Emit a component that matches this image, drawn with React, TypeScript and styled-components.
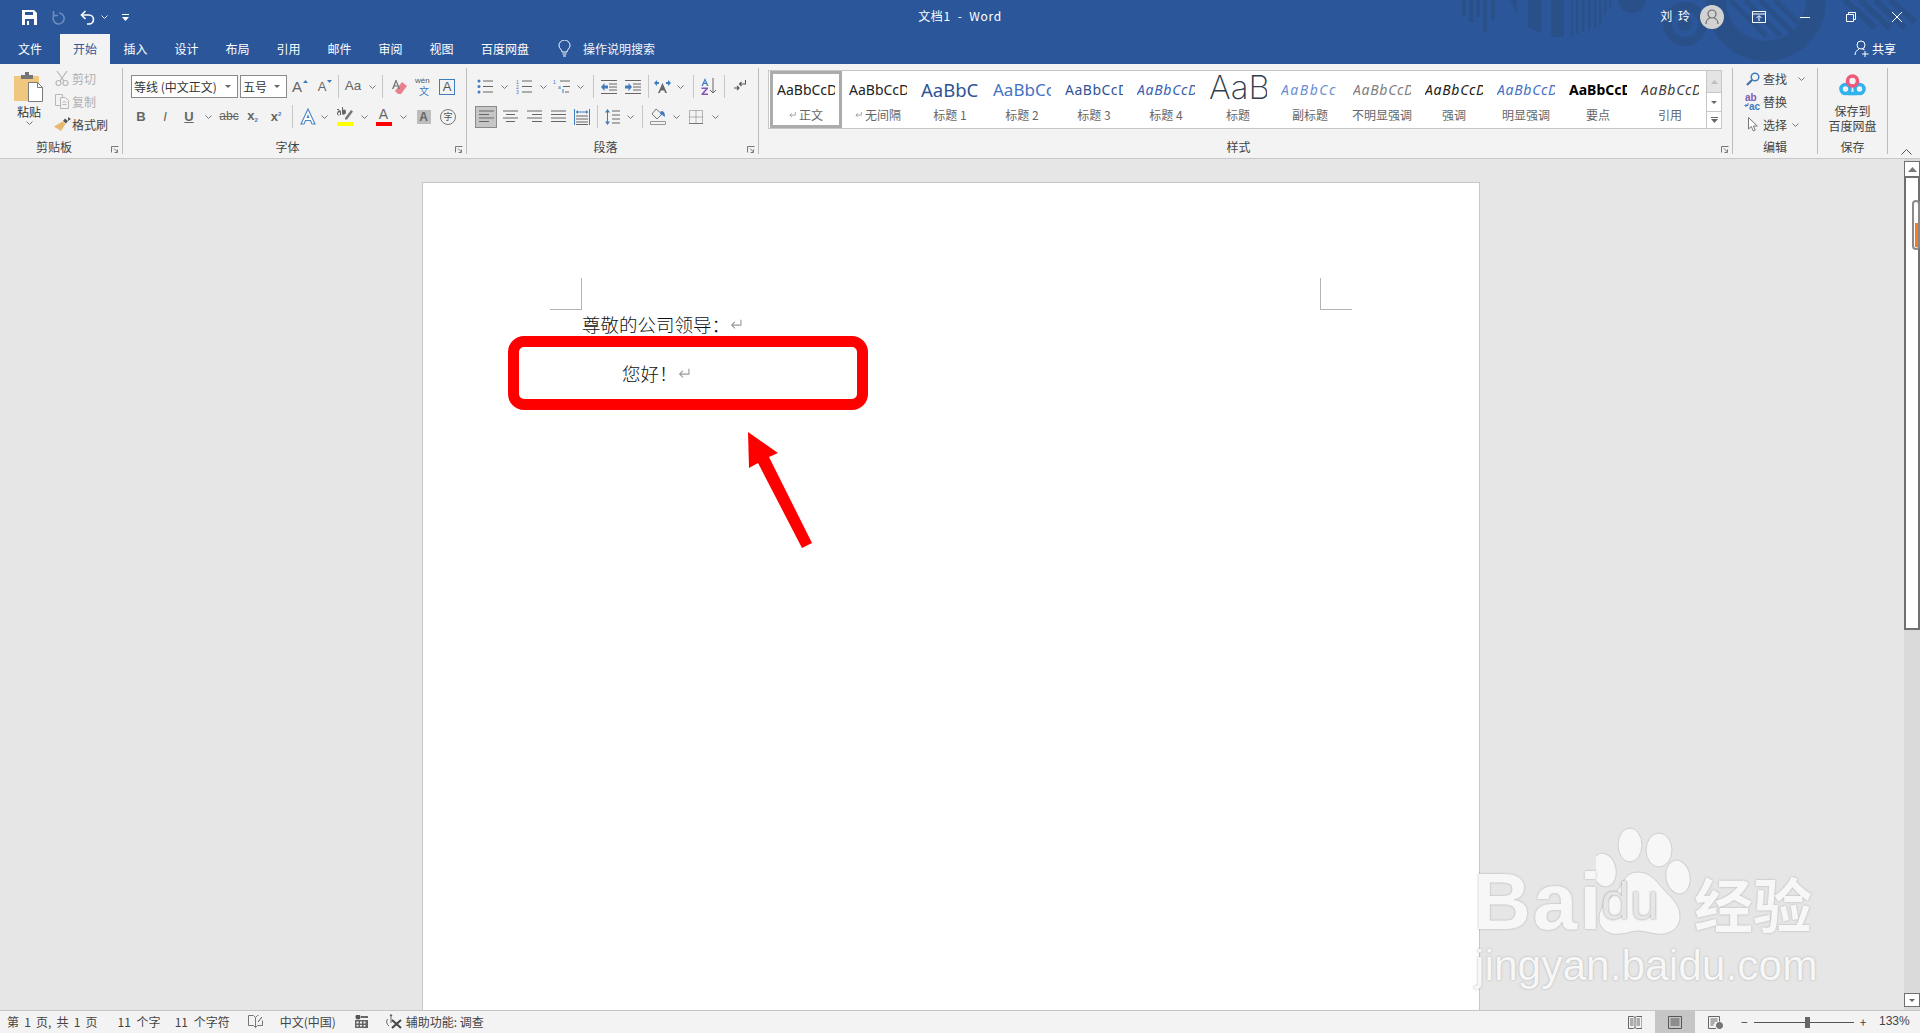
import React from 'react';
import styled, { createGlobalStyle } from 'styled-components';

const uiFont = '"Noto Sans CJK SC", "Liberation Sans", sans-serif';
const latinFont = '"Liberation Sans", "Noto Sans CJK SC", sans-serif';
const blue = '#2b579a';
const ink = '#666666';
const accent = '#3f7cbf';

const GlobalStyle = createGlobalStyle`
  html, body {
    margin: 0;
    padding: 0;
    overflow: hidden;
    background: #e6e6e6;
  }
  * {
    box-sizing: border-box;
  }
`;

const Window = styled.div`
  position: relative;
  width: 1920px;
  height: 1033px;
  display: flex;
  flex-direction: column;
  overflow: hidden;
  font-family: ${uiFont};
  font-size: 12px;
  color: #444;
`;

const Header = styled.header`
  position: relative;
  height: 64px;
  flex: none;
  background: ${blue};
  color: #fff;
`;

const HeaderArt = styled.svg`
  position: absolute;
  right: 0;
  top: 0;
`;

const TitleBar = styled.div`
  position: relative;
  height: 34px;
  display: grid;
  grid-template-columns: 1fr auto 1fr;
  align-items: center;
`;

const Quick = styled.div`
  display: flex;
  align-items: center;
  padding-left: 21px;
`;

const QuickCell = styled.div<{ $w: number }>`
  width: ${(p) => p.$w}px;
  height: 24px;
  flex: none;
  display: flex;
  align-items: center;
  justify-content: center;
`;

const DocTitle = styled.div`
  white-space: pre;
  font-size: 12px;
  letter-spacing: 0.7px;
  margin-bottom: 4px;
`;

const Account = styled.div`
  display: flex;
  align-items: center;
  justify-content: flex-end;
`;

const UserName = styled.span`
  margin-right: 10px;
  margin-bottom: 4px;
  white-space: pre;
  word-spacing: 3px;
`;

const Avatar = styled.div`
  width: 24px;
  height: 24px;
  margin-right: 12px;
  border-radius: 50%;
  background: #d2d2d2;
  display: flex;
  align-items: center;
  justify-content: center;
`;

const WinButton = styled.div`
  width: 46px;
  height: 30px;
  display: flex;
  align-items: center;
  justify-content: center;
`;

const TabBar = styled.nav`
  position: relative;
  height: 30px;
  display: flex;
`;

const Tab = styled.div<{ $w?: number; $active?: boolean }>`
  width: ${(p) => p.$w ?? 51}px;
  flex: none;
  padding-bottom: 2px;
  display: flex;
  align-items: center;
  justify-content: center;
  background: ${(p) => (p.$active ? '#f3f3f3' : 'transparent')};
  color: ${(p) => (p.$active ? blue : '#fff')};
`;

const TellMe = styled.div`
  margin-left: 15px;
  padding-bottom: 2px;
  display: flex;
  align-items: center;
  gap: 12px;
  color: #f2f5fa;
`;

const Share = styled.div`
  margin-left: auto;
  margin-right: 24px;
  padding-bottom: 2px;
  display: flex;
  align-items: center;
  gap: 3px;
`;

const Ribbon = styled.section`
  height: 95px;
  flex: none;
  display: flex;
  background: #f3f3f3;
  border-bottom: 1px solid #c8c8c8;
`;

const Group = styled.div<{ $w: number; $pad?: number }>`
  position: relative;
  width: ${(p) => p.$w}px;
  height: 86px;
  margin-top: 4px;
  flex: none;
  display: flex;
  flex-direction: column;
  padding-left: ${(p) => p.$pad ?? 0}px;
  border-right: 1px solid #bcbcbc;
`;

const GroupBody = styled.div<{ $top?: number }>`
  padding-top: ${(p) => p.$top ?? 0}px;
  display: flex;
  flex-direction: column;
`;

const GroupLabel = styled.div<{ $inset?: number }>`
  position: absolute;
  left: 0;
  right: ${(p) => p.$inset ?? 0}px;
  bottom: -2px;
  height: 18px;
  line-height: 18px;
  text-align: center;
  color: #444;
`;

const Launcher = styled.svg`
  position: absolute;
  right: 3px;
  bottom: 1px;
`;

const Tools = styled.div<{ $gap?: number }>`
  display: flex;
  align-items: center;
  height: 23px;
  margin-bottom: ${(p) => p.$gap ?? 0}px;
`;

const Cell = styled.div<{ $w: number; $l?: number }>`
  width: ${(p) => p.$w}px;
  height: 22px;
  margin-left: ${(p) => p.$l ?? 0}px;
  flex: none;
  display: flex;
  align-items: center;
  justify-content: center;
`;

const ActiveCell = styled(Cell)`
  background: #c6c6c6;
  border: 1px solid #8a8a8a;
`;

const Divider = styled.div<{ $l?: number }>`
  width: 1px;
  height: 23px;
  flex: none;
  margin-left: ${(p) => p.$l ?? 0}px;
  background: #c6c6c6;
`;

const Picker = styled.div<{ $w: number; $l?: number }>`
  width: ${(p) => p.$w}px;
  height: 23px;
  flex: none;
  margin-left: ${(p) => p.$l ?? 0}px;
  padding: 0 6px 0 2px;
  display: flex;
  align-items: center;
  justify-content: space-between;
  background: #fff;
  border: 1px solid #8a8a8a;
  color: #333;
  white-space: nowrap;
  overflow: hidden;
`;

const Caret = styled.span`
  width: 0;
  height: 0;
  flex: none;
  border-left: 3.5px solid transparent;
  border-right: 3.5px solid transparent;
  border-top: 3.5px solid #666;
`;

const Letter = styled.span<{ $size?: number; $color?: string; $bold?: boolean; $italic?: boolean; $under?: boolean; $strike?: boolean }>`
  font-family: ${latinFont};
  font-size: ${(p) => p.$size ?? 13}px;
  line-height: 1.2;
  font-weight: ${(p) => (p.$bold ? 700 : 400)};
  font-style: ${(p) => (p.$italic ? 'italic' : 'normal')};
  color: ${(p) => p.$color ?? ink};
  text-decoration: ${(p) => (p.$under ? 'underline' : p.$strike ? 'line-through' : 'none')};
`;

const TopMark = styled.span`
  align-self: flex-start;
  margin-top: 4px;
  margin-left: 1px;
  display: flex;
`;

const Sub = styled.sub`
  font-size: 6px;
  color: ${accent};
  vertical-align: -2px;
`;

const Sup = styled.sup`
  font-size: 6px;
  color: ${accent};
  vertical-align: 5px;
`;

const BarLetter = styled.span<{ $bar: string }>`
  display: flex;
  flex-direction: column;
  align-items: center;
  font-family: ${latinFont};
  font-size: 14px;
  line-height: 14px;
  color: ${ink};
  &::after {
    content: '';
    width: 16px;
    height: 4px;
    margin-top: 1px;
    background: ${(p) => p.$bar};
  }
`;

const BoxLetter = styled.span`
  width: 16px;
  height: 16px;
  display: flex;
  align-items: center;
  justify-content: center;
  border: 1px solid ${accent};
  font-family: ${latinFont};
  font-size: 13px;
  color: #555;
`;

const ShadeLetter = styled.span`
  width: 14px;
  height: 14px;
  display: flex;
  align-items: center;
  justify-content: center;
  background: #bdbdbd;
  font-family: ${latinFont};
  font-weight: 700;
  font-size: 12px;
  color: #666;
`;

const Circled = styled.span`
  width: 16px;
  height: 16px;
  border-radius: 50%;
  display: flex;
  align-items: center;
  justify-content: center;
  border: 1px solid #777;
  font-size: 9px;
  color: #555;
`;

const PasteColumn = styled.div`
  width: 46px;
  margin-left: 6px;
  flex: none;
  display: flex;
  flex-direction: column;
  align-items: center;
  padding-top: 4px;
`;

const PasteText = styled.div`
  margin-top: 2px;
  margin-bottom: 1px;
  line-height: 16px;
  color: #333;
`;

const ClipRow = styled.div`
  display: flex;
`;

const MiniColumn = styled.div`
  margin-left: 1px;
  margin-top: -1px;
  display: flex;
  flex-direction: column;
`;

const MiniRow = styled.div<{ $off?: boolean }>`
  height: 23px;
  display: flex;
  align-items: center;
  color: ${(p) => (p.$off ? '#b0b0b0' : '#444')};
`;

const MiniIcon = styled.div<{ $w?: number }>`
  width: ${(p) => p.$w ?? 18}px;
  margin-right: 1px;
  flex: none;
  display: flex;
  justify-content: center;
`;

const MiniChevron = styled.span<{ $l: number }>`
  margin-left: ${(p) => p.$l}px;
  display: flex;
`;

const Gallery = styled.div`
  margin-top: 2px;
  width: 954px;
  height: 59px;
  display: flex;
  padding-left: 1px;
  background: #fff;
  border: 1px solid #c6c6c6;
`;

const StyleItem = styled.div<{ $selected?: boolean }>`
  width: 72px;
  height: 57px;
  flex: none;
  display: flex;
  flex-direction: column;
  align-items: center;
  box-shadow: ${(p) => (p.$selected ? 'inset 0 0 0 3px #ababab' : 'none')};
`;

const Sample = styled.div<{ $size?: number; $color?: string; $italic?: boolean; $bold?: boolean; $light?: boolean; $track?: number }>`
  width: 58px;
  height: 34px;
  margin-top: 1px;
  overflow: hidden;
  white-space: nowrap;
  font-family: ${(p) => (p.$light ? 'Inter, sans-serif' : '"Noto Sans", sans-serif')};
  font-size: ${(p) => p.$size ?? 14}px;
  line-height: ${(p) => (p.$light ? 30 : 36)}px;
  font-weight: ${(p) => (p.$bold ? 700 : p.$light ? 200 : 400)};
  font-style: ${(p) => (p.$italic ? 'italic' : 'normal')};
  letter-spacing: ${(p) => p.$track ?? 0}px;
  color: ${(p) => p.$color ?? '#222'};
`;

const StyleName = styled.div`
  display: flex;
  align-items: center;
  gap: 3px;
  height: 16px;
  color: #666;
  white-space: nowrap;
`;

const GalleryScroll = styled.div`
  margin-left: auto;
  width: 15px;
  display: flex;
  flex-direction: column;
  border-left: 1px solid #c6c6c6;
`;

const ScrollStep = styled.div<{ $h: number; $off?: boolean }>`
  height: ${(p) => p.$h}px;
  display: flex;
  align-items: center;
  justify-content: center;
  background: ${(p) => (p.$off ? '#e4e4e4' : '#fff')};
  & + & {
    border-top: 1px solid #c6c6c6;
  }
`;

const EditBody = styled(GroupBody)`
  margin-top: -1px;
`;

const EditIcon = styled.div`
  width: 21px;
  flex: none;
  display: flex;
  justify-content: center;
`;

const SaveBody = styled.div`
  display: flex;
  flex-direction: column;
  align-items: center;
  padding-top: 6px;
  line-height: 15px;
  color: #444;
`;

const SaveText = styled.div`
  margin-top: 6px;
  text-align: center;
`;

const Collapse = styled.div`
  flex: 1;
  display: flex;
  justify-content: center;
  align-items: flex-end;
  padding: 0 0 3px 5px;
`;

const Workspace = styled.main`
  height: 851px;
  flex: none;
  display: flex;
  background: #e6e6e6;
`;

const DocArea = styled.div`
  flex: 1;
  overflow: hidden;
  padding: 23px 0 0 422px;
`;

const Page = styled.article`
  position: relative;
  width: 1058px;
  height: 900px;
  padding: 95px 127px 0;
  background: #fff;
  border: 1px solid #c6c6c6;
`;

const Crops = styled.div`
  display: flex;
  justify-content: space-between;
  margin-bottom: -8px;
`;

const Crop = styled.div<{ $right?: boolean }>`
  width: 32px;
  height: 32px;
  border-bottom: 1px solid #b4b4b4;
  ${(p) => (p.$right ? 'border-left' : 'border-right')}: 1px solid #b4b4b4;
`;

const Para = styled.p<{ $indent?: number }>`
  margin: 0;
  padding-left: ${(p) => 32 + (p.$indent ?? 0)}px;
  padding-bottom: 5px;
  height: 49px;
  display: flex;
  align-items: center;
  font-size: 18.5px;
  font-weight: 300;
  color: #111;
`;

const RedBox = styled.div`
  position: absolute;
  left: 85px;
  top: 153px;
  width: 360px;
  height: 74px;
  border: 11px solid #ff0000;
  border-radius: 16px;
`;

const Arrow = styled.svg`
  position: absolute;
  left: 317px;
  top: 242px;
`;

const Scrollbar = styled.aside`
  width: 16px;
  flex: none;
  padding-top: 2px;
  display: flex;
  flex-direction: column;
  background: #dadada;
`;

const ScrollEnd = styled.div<{ $h: number }>`
  height: ${(p) => p.$h}px;
  flex: none;
  display: flex;
  align-items: center;
  justify-content: center;
  background: #fff;
  border: 1px solid #707070;
`;

const Track = styled.div`
  position: relative;
  height: 453px;
  flex: none;
  background: #fff;
  border: 2px solid #707070;
  border-top-width: 1px;
`;

const Thumb = styled.div`
  position: absolute;
  right: -2px;
  top: 22px;
  width: 8px;
  height: 50px;
  border: 2px solid #8a8a8a;
  border-radius: 4px;
  background: #fff;
  &::after {
    content: '';
    position: absolute;
    left: 1px;
    bottom: 1px;
    width: 3px;
    height: 24px;
    background: #f47b20;
  }
`;

const ScrollGap = styled.div`
  flex: 1;
`;

const ScrollDown = styled(ScrollEnd)`
  margin-bottom: 3px;
`;

const StatusBar = styled.footer`
  height: 23px;
  flex: none;
  display: flex;
  align-items: center;
  padding-left: 7px;
  background: #f3f3f3;
  border-top: 1px solid #c6c6c6;
  color: #444;
`;

const StatusItem = styled.div<{ $l?: number; $word?: number }>`
  margin-left: ${(p) => p.$l ?? 0}px;
  margin-bottom: 2px;
  flex: none;
  display: flex;
  align-items: center;
  white-space: pre;
  word-spacing: ${(p) => p.$word ?? 0}px;
`;

const ViewButton = styled.div<{ $w: number; $active?: boolean }>`
  width: ${(p) => p.$w}px;
  height: 22px;
  flex: none;
  display: flex;
  align-items: center;
  justify-content: center;
  background: ${(p) => (p.$active ? '#c6c6c6' : 'transparent')};
`;

const ViewSet = styled.div`
  margin-left: auto;
  display: flex;
  align-items: center;
`;

const Zoomer = styled.div`
  margin-left: 6px;
  width: 126px;
  flex: none;
  display: flex;
  align-items: center;
  gap: 6px;
`;

const ZoomLine = styled.div`
  position: relative;
  width: 100px;
  height: 1px;
  flex: none;
  background: #555;
  &::after {
    content: '';
    position: absolute;
    left: 51px;
    top: -5px;
    width: 5px;
    height: 11px;
    background: #666;
  }
`;

const ZoomValue = styled.div`
  width: 53px;
  padding-left: 12px;
  margin-bottom: 2px;
  font-family: ${latinFont};
`;

const Watermark = styled.div`
  position: absolute;
  left: 1470px;
  top: 825px;
  width: 350px;
  height: 170px;
  color: #f7f7f7;
  text-shadow: 0 0 2px rgba(110, 110, 110, 0.55);
  pointer-events: none;
`;

const MarkPaw = styled.svg`
  position: absolute;
  left: 126px;
  top: 0;
`;

const MarkBai = styled.span`
  position: absolute;
  left: 3px;
  top: 32px;
  font-family: ${latinFont};
  font-weight: 700;
  font-size: 80px;
  letter-spacing: 2px;
  line-height: 90px;
`;

const MarkDu = styled.span`
  position: absolute;
  left: 131px;
  top: 48px;
  font-family: ${latinFont};
  font-size: 52px;
  line-height: 56px;
  color: #e6e6e6;
  text-shadow: 0 0 2px rgba(90, 90, 90, 0.7);
`;

const MarkCn = styled.span`
  position: absolute;
  left: 224px;
  top: 43px;
  font-family: ${uiFont};
  font-weight: 700;
  font-size: 59px;
  line-height: 70px;
  white-space: nowrap;
`;

const MarkUrl = styled.span`
  position: absolute;
  left: 5px;
  top: 116px;
  font-family: ${latinFont};
  font-size: 42.5px;
  line-height: 50px;
  white-space: nowrap;
`;

type ChevronProps = { color?: string };

function Chevron({ color = '#777' }: ChevronProps) {
  return (
    <svg width="7" height="4" viewBox="0 0 7 4" fill="none" stroke={color}>
      <path d="M.5.5l3 3 3-3" />
    </svg>
  );
}

function ReturnMark({ size = 12, color = '#999999' }: { size?: number; color?: string }) {
  return (
    <svg width={size} height={size} viewBox="0 0 11 11" fill="none" stroke={color} strokeWidth="1">
      <path d="M10 1.500v5H1.500M4.500 3.500l-3 3 3 3" />
    </svg>
  );
}

function LauncherIcon() {
  return (
    <Launcher width="8" height="7" viewBox="0 0 8 7" fill="none" stroke="#777">
      <path d="M.5 6.500v-6h7M3 2.500l3.500 3.500M6.500 3.500v3h-3" />
    </Launcher>
  );
}

const Lines = ({ rows }: { rows: [number, number][] }) => (
  <>
    {rows.map(([x1, x2], i) => (
      <path key={i} d={`M${x1} ${1.5 + i * 3.5}H${x2}`} />
    ))}
  </>
);

function AlignIcon({ rows }: { rows: [number, number][] }) {
  return (
    <svg width="15" height="15" viewBox="0 0 15 15" fill="none" stroke={ink}>
      <g transform="translate(0 .5)">
        <Lines rows={rows} />
      </g>
    </svg>
  );
}

function ListIcon({ kind }: { kind: 'bullet' | 'number' | 'multi' }) {
  return (
    <svg width="18" height="15" viewBox="0 0 18 15" fill="none">
      {kind === 'bullet' && (
        <g fill={accent}>
          <circle cx="2" cy="2" r="1.500" />
          <circle cx="2" cy="7.500" r="1.500" />
          <circle cx="2" cy="13" r="1.500" />
        </g>
      )}
      {kind !== 'bullet' && (
        <g fill={accent} fontSize="5" fontFamily="Liberation Sans">
          <text x="0" y="4.500">1</text>
          {kind === 'number' ? (
            <>
              <text x="0" y="9.500">2</text>
              <text x="0" y="14.500">3</text>
            </>
          ) : (
            <text x="5" y="9.500">a</text>
          )}
        </g>
      )}
      <g stroke={ink}>
        {kind === 'multi' ? (
          <path d="M7 2h10M10 7.500h7M12 13h4" />
        ) : (
          <path d="M6 2h10M6 7.500h10M6 13h10" />
        )}
      </g>
      {kind === 'multi' && <path d="M10 10v4" stroke={accent} />}
    </svg>
  );
}

function IndentIcon({ flip }: { flip?: boolean }) {
  return (
    <svg width="17" height="14" viewBox="0 0 17 14" fill="none">
      <path d="M0 .5h16M8 4h8M8 7h8M8 10h8M0 13.500h16" stroke={ink} />
      <path d={flip ? 'M0 5.500h3.500V3L7 7l-3.500 4V8.500H0z' : 'M7 5.500H3.500V3L0 7l3.500 4V8.500H7z'} fill={accent} />
    </svg>
  );
}

const icons = {
  save: (
    <svg width="15" height="16" viewBox="0 0 15 16" fill="#fff">
      <path d="M0 1h12l3 3v12H0z" />
      <path d="M3 3h8v3H3zM3 10h9v6H3z" fill={blue} />
      <path d="M5 12h2v4H5z" fill="#fff" />
    </svg>
  ),
  redo: (
    <svg width="14" height="15" viewBox="0 0 14 15" fill="none" stroke="#6d8dbd" strokeWidth="1.600">
      <path d="M8 3a5.500 5.500 0 1 1-5 2.500" />
      <path d="M2.500 1v4.500H7" />
    </svg>
  ),
  undo: (
    <svg width="15" height="15" viewBox="0 0 15 15" fill="none" stroke="#fff" strokeWidth="1.600">
      <path d="M5.500 1L1.500 5l4 4" />
      <path d="M2 5h7a4.500 4.500 0 0 1 0 9H7" />
    </svg>
  ),
  customize: (
    <svg width="7" height="7" viewBox="0 0 7 7" fill="#fff">
      <path d="M0 0h7v1H0zM0 3h7L3.500 7z" />
    </svg>
  ),
  display: (
    <svg width="14" height="12" viewBox="0 0 14 12" fill="none" stroke="#fff">
      <path d="M.5.500h13v11H.5zM.5 3h13" />
      <path d="M7 10V5M4.500 7L7 4.500 9.500 7" />
    </svg>
  ),
  minimize: (
    <svg width="10" height="1" viewBox="0 0 10 1">
      <path d="M0 0h10v1H0z" fill="#fff" />
    </svg>
  ),
  restore: (
    <svg width="10" height="10" viewBox="0 0 10 10" fill="none" stroke="#fff">
      <path d="M.5 2.500h7v7h-7zM2.500 2.500v-2h7v7h-2" />
    </svg>
  ),
  close: (
    <svg width="12" height="12" viewBox="0 0 12 12" fill="none" stroke="#fff">
      <path d="M1 1l10 10M11 1L1 11" />
    </svg>
  ),
  person: (
    <svg width="14" height="16" viewBox="0 0 14 16" fill="none" stroke="#6c6c6c" strokeWidth="1.200">
      <circle cx="7" cy="5" r="4" />
      <path d="M1 15c0-3 2-5.500 4-6M13 15c0-3-2-5.500-4-6" />
    </svg>
  ),
  share: (
    <svg width="15" height="17" viewBox="0 0 15 17" fill="none" stroke="#fff">
      <circle cx="7" cy="5" r="4" />
      <path d="M1 15c0-3 2-5 4-6M8.500 9.500h2M11 11v6M8 14h6.500" />
    </svg>
  ),
  bulb: (
    <svg width="13" height="17" viewBox="0 0 13 17" fill="none" stroke="#fff">
      <path d="M4 12c0-2.500-3-3.500-3-6.500a5.500 5.500 0 0 1 11 0C12 8.500 9 9.500 9 12z" />
      <path d="M4.500 14h4M5 16h3" />
    </svg>
  ),
  paste: (
    <svg width="30" height="30" viewBox="0 0 30 30">
      <path d="M0 4h25v25H0z" fill="#efc77e" />
      <path d="M7 3h4V0h4v3h4v4H7z" fill="#767676" />
      <path d="M14.500 10.500h9l5 5v14h-14z" fill="#fff" stroke="#7a7a7a" />
      <path d="M23.500 10.500v5h5" fill="none" stroke="#7a7a7a" />
    </svg>
  ),
  cut: (
    <svg width="14" height="15" viewBox="0 0 14 15" fill="none" stroke="#b8b8b8" strokeWidth="1.200">
      <path d="M2 0l7 10M12 0L5 10" />
      <circle cx="3.500" cy="12" r="2.500" />
      <circle cx="10.500" cy="12" r="2.500" />
    </svg>
  ),
  copy: (
    <svg width="15" height="15" viewBox="0 0 15 15" fill="none" stroke="#b8b8b8">
      <path d="M.5.500h7v3M.5.500v11h5M5.500 3.500h5l3 3v8h-8zM7.500 8h4M7.500 10.500h4" />
    </svg>
  ),
  brush: (
    <svg width="17" height="15" viewBox="0 0 17 15">
      <path d="M11 1.500l3 2.500-2 2.500-3-2.500z" fill="#555" />
      <path d="M14 0l3 2-3 2z" fill="#555" />
      <path d="M8.500 4.500l3 2.500L7 14 0 9.500z" fill="#e6b96f" />
    </svg>
  ),
  grow: (
    <svg width="5" height="3" viewBox="0 0 5 3" fill={accent}>
      <path d="M0 3l2.500-3L5 3z" />
    </svg>
  ),
  shrink: (
    <svg width="5" height="3" viewBox="0 0 5 3" fill={accent}>
      <path d="M0 0l2.500 3L5 0z" />
    </svg>
  ),
  eraser: (
    <svg width="16" height="16" viewBox="0 0 16 16">
      <path d="M10 3l5 4-6 8H6L3 12z" fill="#ea7f8e" />
      <path d="M0 10L3.500 1h1L8 10H6.500l-.8-2.500H2.500L1.500 10zM3 6.500h2.300L4 3z" fill="#777" />
    </svg>
  ),
  phonetic: (
    <svg width="18" height="21" viewBox="0 0 18 21">
      <text x="0" y="7" fontSize="8" fill="#555" fontFamily="Liberation Sans">wén</text>
      <text x="4" y="19" fontSize="10" fill={accent} fontFamily="Noto Sans CJK SC">文</text>
    </svg>
  ),
  textEffect: (
    <svg width="18" height="18" viewBox="0 0 18 18">
      <path d="M9 1l7 15h-3l-1.500-3.500h-5L5 16H2z" fill="#fff" stroke="#4a86c5" strokeWidth="1.100" />
      <path d="M7.500 10h3L9 6z" fill="#4a86c5" />
    </svg>
  ),
  highlight: (
    <svg width="16" height="19" viewBox="0 0 16 19">
      <path d="M0 2h2l-.3 1.500C1 3 .5 3 0 3zM1 4c1.500-1 3-1 3 1v3H3V5.500C2 5 1 6 1 7s1 1 2 .5V8c-2 1-3.500 0-3-2zM5 0h1v3c1.500-1 3-.3 3 2s-2 3-4 2.500z" fill="#666" />
      <path d="M8 11l6-8 2 1.500-6 8H8z" fill="#777" />
      <path d="M0 15h16v4H0z" fill="#ffff00" />
    </svg>
  ),
  wideChar: (
    <svg width="17" height="14" viewBox="0 0 17 14" fill="none">
      <path d="M8.500 3L4 13h1.800l1-2.500h3.400l1 2.500H13z" fill="#666" />
      <path d="M0 3l3-3v2h2v2H3v2zM17 3l-3-3v2h-2v2h2v2z" fill={accent} />
    </svg>
  ),
  sort: (
    <svg width="16" height="17" viewBox="0 0 16 17" fill="none">
      <path d="M4 0l3.500 8H6l-.7-2H2.700L2 8H.500zM3.200 4.800h1.600L4 2.500z" fill={accent} />
      <path d="M.5 9.500h6.500v1.300L2.800 15.500H7V17H.5v-1.300l4.200-4.700H.5z" fill="#8258b5" />
      <path d="M12 0v15M9 12l3 3 3-3" stroke={ink} />
    </svg>
  ),
  marks: (
    <svg width="12" height="13" viewBox="0 0 12 13" fill="none" stroke="#555" strokeWidth="1.100">
      <path d="M11.500 0v4H5.500M7.500 2l-2 2 2 2" />
      <path d="M0 8h5M3 6l2 2-2 2" />
    </svg>
  ),
  distribute: (
    <svg width="16" height="16" viewBox="0 0 16 16" fill="none">
      <path d="M.5 0v16M15.500 0v16M2 3h12" stroke={accent} />
      <path d="M2 3l2-2v4zM14 3l-2-2v4z" fill={accent} />
      <path d="M2 7h12M2 10h12M2 13h12M2 15.500h12" stroke={ink} />
    </svg>
  ),
  spacing: (
    <svg width="15" height="16" viewBox="0 0 15 16" fill="none">
      <path d="M2.500 2v12" stroke={accent} />
      <path d="M2.500 0L5 3.500H0zM2.500 16L5 12.500H0z" fill={accent} />
      <path d="M7 2h8M7 6h8M7 10h8M7 14h8" stroke={ink} />
    </svg>
  ),
  shade: (
    <svg width="17" height="17" viewBox="0 0 17 17" fill="none">
      <path d="M6 1l6 5-5 5-5-5z" stroke="#777" />
      <path d="M11 3c3 0 4 2 4 6-1-1-3-2-5-3z" fill={accent} />
      <path d="M.5 13.500h15v3H.5z" stroke="#999" />
    </svg>
  ),
  borders: (
    <svg width="14" height="14" viewBox="0 0 14 14" fill="none" stroke="#777" strokeDasharray="1 1">
      <path d="M.5.500h13v13H.5zM7 .5v13M.5 7h13" />
      <path d="M0 13.500h14" strokeDasharray="none" />
    </svg>
  ),
  find: (
    <svg width="14" height="14" viewBox="0 0 14 14" fill="none" stroke={accent} strokeWidth="1.500">
      <circle cx="9" cy="5" r="3.800" />
      <path d="M6 8l-5 5" strokeWidth="2.200" stroke="#3f6fa8" />
    </svg>
  ),
  replace: (
    <svg width="17" height="17" viewBox="0 0 17 17" fill="none">
      <text x="1" y="8" fontSize="10" fontFamily="Liberation Sans" fontWeight="700" fill="#8258b5">ab</text>
      <text x="5" y="17" fontSize="10" fontFamily="Liberation Sans" fontWeight="700" fill={accent}>ac</text>
      <path d="M4 10v2.500H1M2.500 11L1 12.500 2.500 14" stroke={accent} />
    </svg>
  ),
  select: (
    <svg width="10" height="15" viewBox="0 0 10 15" fill="#fff" stroke="#777">
      <path d="M.5.500v11.500l2.800-2.500 2 4.500 2-1-2-4h4z" />
    </svg>
  ),
  cloud: (
    <svg width="27" height="23" viewBox="0 0 27 23" fill="none" strokeWidth="3.600">
      <circle cx="6.500" cy="15" r="4.500" stroke="#2fb2ee" />
      <circle cx="20.500" cy="15" r="4.500" stroke="#2fb2ee" />
      <circle cx="13.500" cy="7" r="5" stroke="#ef5a78" />
      <path d="M9 19.500h9" stroke="#2fb2ee" />
    </svg>
  ),
  book: (
    <svg width="15" height="13" viewBox="0 0 15 13" fill="none" stroke="#777">
      <path d="M.5.500h5l2 2v10l-2-2h-5zM7.500 2.500l2-2h1M7.500 12.500l2-2h5v-5" />
      <path d="M10 7l4-5" stroke="#555" />
    </svg>
  ),
  calendar: (
    <svg width="13" height="13" viewBox="0 0 13 13">
      <circle cx="3" cy="2" r="2.500" fill="#555" />
      <path d="M6 1h7v2H6zM0 5h13v8H0z" fill="#666" />
      <path d="M1.500 6.500h2v2h-2zM5 6.500h2v2H5zM8.500 6.500h2v2h-2zM1.500 10h2v1.500h-2zM5 10h2v1.500H5zM8.500 10h2v1.500h-2z" fill="#f3f3f3" />
    </svg>
  ),
  access: (
    <svg width="17" height="15" viewBox="0 0 17 15" fill="none">
      <circle cx="5" cy="1.500" r="1.200" fill="#666" />
      <path d="M5 3v6M3 12A5 5 0 0 1 1.500 5" stroke="#666" />
      <path d="M6 6l9 8M15 6l-9 8" stroke="#444" strokeWidth="2" />
    </svg>
  ),
  read: (
    <svg width="14" height="13" viewBox="0 0 14 13" fill="none" stroke="#666">
      <path d="M.5.500h5l1.500 1 1.500-1h5.500v12H8.500l-1.500-1-1.500 1h-5zM7 1.500v10M2 3h3.500M2 5h3.500M2 7h3.500M2 9h3.500M8.500 3H12M8.500 5H12M8.500 7H12M8.500 9H12" />
    </svg>
  ),
  print: (
    <svg width="14" height="13" viewBox="0 0 14 13" fill="none" stroke="#555">
      <path d="M.5.500h13v12H.5zM2.500 3h9M2.500 5h9M2.500 7h9M2.500 9h9" />
    </svg>
  ),
  web: (
    <svg width="15" height="13" viewBox="0 0 15 13" fill="none" stroke="#666">
      <path d="M8 12.500H.5V.500h11v5M2.500 3h7M2.500 5h7M2.500 7h4M2.500 9h3" />
      <circle cx="11.500" cy="9.500" r="3" fill="#777" />
    </svg>
  ),
};

type StyleEntry = {
  name: string;
  mark?: boolean;
  selected?: boolean;
  size?: number;
  color?: string;
  text?: string;
  italic?: boolean;
  bold?: boolean;
  light?: boolean;
  track?: number;
};

const styleItems: StyleEntry[] = [
  { name: '正文', mark: true, selected: true },
  { name: '无间隔', mark: true },
  { name: '标题 1', size: 18.5, color: '#2f5496', text: 'AaBbC' },
  { name: '标题 2', size: 17, color: '#4472c4', text: 'AaBbCc' },
  { name: '标题 3', color: '#2f5496', track: 0.5 },
  { name: '标题 4', color: '#3a62b0', italic: true, track: 0.7 },
  { name: '标题', light: true, size: 33, color: '#323e4f', text: 'AaB' },
  { name: '副标题', italic: true, color: '#6a8fd0', text: 'AaBbCc', track: 1.5 },
  { name: '不明显强调', italic: true, color: '#808080', track: 0.7 },
  { name: '强调', italic: true, color: '#222', track: 0.7 },
  { name: '明显强调', italic: true, color: '#4472c4', track: 0.7 },
  { name: '要点', bold: true, color: '#000' },
  { name: '引用', italic: true, color: '#404040', track: 0.7 },
];

const tabs: [string, number, boolean?][] = [
  ['文件', 60],
  ['开始', 50, true],
  ['插入', 51],
  ['设计', 51],
  ['布局', 51],
  ['引用', 51],
  ['邮件', 51],
  ['审阅', 51],
  ['视图', 51],
  ['百度网盘', 76],
];

function TitleArea() {
  const strips = [
    [1462, 16], [1469, 22], [1476, 17], [1483, 32], [1491, 20],
  ];
  const bars = [
    [1571, 36], [1576, 34], [1582, 32], [1588, 30], [1594, 28], [1599, 25], [1604, 14], [1609, 8],
  ];
  return (
    <Header>
      <HeaderArt width="480" height="64" viewBox="1440 0 480 64" fill="#2a5089">
        {strips.map(([x, h]) => (
          <rect key={x} x={x} y="0" width="4" height={h} />
        ))}
        {bars.map(([x, h]) => (
          <rect key={x} x={x} y="0" width="2.500" height={h} />
        ))}
        <path d="M1510 0h7v14zM1528 0h13v33l-13-6zM1551 0h13v37h-13z" />
        <circle cx="1632" cy="-1" r="14" />
        <circle cx="1685" cy="24" r="17.500" fill="none" stroke="#2a5089" strokeWidth="9" />
        <circle cx="1685" cy="24" r="7" />
        <circle cx="1766" cy="1" r="50" fill="none" stroke="#2a5089" strokeWidth="20" />
        <path d="M1730 0l36 36M1745 0l36 36M1760 0l36 36M1775 0l24 24" stroke="#2a5089" strokeWidth="5" />
        <path d="M1845 0l30 28M1860 0l30 28M1875 0l30 28M1890 0l25 22" stroke="#2a5089" strokeWidth="6" />
      </HeaderArt>
      <TitleBar>
        <Quick>
          <QuickCell $w={16}>{icons.save}</QuickCell>
          <QuickCell $w={42}>{icons.redo}</QuickCell>
          <QuickCell $w={16}>{icons.undo}</QuickCell>
          <QuickCell $w={18}>
            <Chevron color="#dfe6f1" />
          </QuickCell>
          <QuickCell $w={24}>{icons.customize}</QuickCell>
        </Quick>
        <DocTitle>{'文档1  -  Word'}</DocTitle>
        <Account>
          <UserName>{'刘 玲'}</UserName>
          <Avatar>{icons.person}</Avatar>
          <WinButton>{icons.display}</WinButton>
          <WinButton>{icons.minimize}</WinButton>
          <WinButton>{icons.restore}</WinButton>
          <WinButton>{icons.close}</WinButton>
        </Account>
      </TitleBar>
      <TabBar>
        {tabs.map(([label, w, active]) => (
          <Tab key={label} $w={w} $active={active}>
            {label}
          </Tab>
        ))}
        <TellMe>
          {icons.bulb}
          操作说明搜索
        </TellMe>
        <Share>
          {icons.share}
          共享
        </Share>
      </TabBar>
    </Header>
  );
}

function ClipboardGroup() {
  return (
    <Group $w={123}>
      <ClipRow>
        <PasteColumn>
          {icons.paste}
          <PasteText>粘贴</PasteText>
          <Chevron />
        </PasteColumn>
        <MiniColumn>
          <MiniRow $off>
            <MiniIcon>{icons.cut}</MiniIcon>剪切
          </MiniRow>
          <MiniRow $off>
            <MiniIcon>{icons.copy}</MiniIcon>复制
          </MiniRow>
          <MiniRow>
            <MiniIcon>{icons.brush}</MiniIcon>格式刷
          </MiniRow>
        </MiniColumn>
      </ClipRow>
      <GroupLabel $inset={14}>剪贴板</GroupLabel>
      <LauncherIcon />
    </Group>
  );
}

function FontGroup() {
  return (
    <Group $w={344} $pad={8}>
      <GroupBody $top={7}>
        <Tools $gap={7}>
          <Picker $w={107}>
            等线 (中文正文)
            <Caret />
          </Picker>
          <Picker $w={47} $l={2}>
            五号
            <Caret />
          </Picker>
          <Cell $w={24} $l={1}>
            <Letter $size={15}>A</Letter>
            <TopMark>{icons.grow}</TopMark>
          </Cell>
          <Cell $w={26}>
            <Letter $size={13}>A</Letter>
            <TopMark>{icons.shrink}</TopMark>
          </Cell>
          <Divider />
          <Cell $w={28}>
            <Letter $size={13.5}>Aa</Letter>
          </Cell>
          <Cell $w={10}>
            <Chevron />
          </Cell>
          <Divider $l={5} />
          <Cell $w={24} $l={5}>
            {icons.eraser}
          </Cell>
          <Cell $w={23}>{icons.phonetic}</Cell>
          <Cell $w={24}>
            <BoxLetter>A</BoxLetter>
          </Cell>
        </Tools>
        <Tools>
          <Cell $w={20}>
            <Letter $bold>B</Letter>
          </Cell>
          <Cell $w={28}>
            <Letter $italic>I</Letter>
          </Cell>
          <Cell $w={20}>
            <Letter $bold $under>U</Letter>
          </Cell>
          <Cell $w={18}>
            <Chevron />
          </Cell>
          <Cell $w={24}>
            <Letter $size={12} $strike>abc</Letter>
          </Cell>
          <Cell $w={23}>
            <Letter $bold>x<Sub>2</Sub></Letter>
          </Cell>
          <Cell $w={24}>
            <Letter $bold>x<Sup>2</Sup></Letter>
          </Cell>
          <Divider $l={4} />
          <Cell $w={22} $l={4}>
            {icons.textEffect}
          </Cell>
          <Cell $w={10}>
            <Chevron />
          </Cell>
          <Cell $w={32}>{icons.highlight}</Cell>
          <Cell $w={7}>
            <Chevron />
          </Cell>
          <Cell $w={31}>
            <BarLetter $bar="#ff0000">A</BarLetter>
          </Cell>
          <Cell $w={8}>
            <Chevron />
          </Cell>
          <Cell $w={33}>
            <ShadeLetter>A</ShadeLetter>
          </Cell>
          <Cell $w={16}>
            <Circled>字</Circled>
          </Cell>
        </Tools>
      </GroupBody>
      <GroupLabel $inset={14}>字体</GroupLabel>
      <LauncherIcon />
    </Group>
  );
}

function ParagraphGroup() {
  return (
    <Group $w={292} $pad={8}>
      <GroupBody $top={7}>
        <Tools $gap={7}>
          <Cell $w={22}>
            <ListIcon kind="bullet" />
          </Cell>
          <Cell $w={14}>
            <Chevron />
          </Cell>
          <Cell $w={28}>
            <ListIcon kind="number" />
          </Cell>
          <Cell $w={8}>
            <Chevron />
          </Cell>
          <Cell $w={29}>
            <ListIcon kind="multi" />
          </Cell>
          <Cell $w={8}>
            <Chevron />
          </Cell>
          <Divider $l={9} />
          <Cell $w={30}>
            <IndentIcon />
          </Cell>
          <Cell $w={18}>
            <IndentIcon flip />
          </Cell>
          <Divider $l={6} />
          <Cell $w={27}>{icons.wideChar}</Cell>
          <Cell $w={8}>
            <Chevron />
          </Cell>
          <Divider $l={9} />
          <Cell $w={30}>{icons.sort}</Cell>
          <Divider />
          <Cell $w={30}>{icons.marks}</Cell>
        </Tools>
        <Tools>
          <ActiveCell $w={22}>
            <AlignIcon rows={[[0, 15], [0, 10], [0, 15], [0, 10]]} />
          </ActiveCell>
          <Cell $w={26}>
            <AlignIcon rows={[[0, 15], [3, 12], [0, 15], [3, 12]]} />
          </Cell>
          <Cell $w={22}>
            <AlignIcon rows={[[0, 15], [5, 15], [0, 15], [5, 15]]} />
          </Cell>
          <Cell $w={26}>
            <AlignIcon rows={[[0, 15], [0, 15], [0, 15], [0, 15]]} />
          </Cell>
          <Cell $w={22}>{icons.distribute}</Cell>
          <Divider $l={4} />
          <Cell $w={28}>{icons.spacing}</Cell>
          <Cell $w={8}>
            <Chevron />
          </Cell>
          <Divider $l={8} />
          <Cell $w={30}>{icons.shade}</Cell>
          <Cell $w={7}>
            <Chevron />
          </Cell>
          <Cell $w={31}>{icons.borders}</Cell>
          <Cell $w={8}>
            <Chevron />
          </Cell>
        </Tools>
      </GroupBody>
      <GroupLabel $inset={14}>段落</GroupLabel>
      <LauncherIcon />
    </Group>
  );
}

function StylesGroup() {
  return (
    <Group $w={974} $pad={9}>
      <Gallery>
        {styleItems.map((s) => (
          <StyleItem key={s.name} $selected={s.selected}>
            <Sample $size={s.size} $color={s.color} $italic={s.italic} $bold={s.bold} $light={s.light} $track={s.track}>
              {s.text ?? 'AaBbCcD'}
            </Sample>
            <StyleName>
              {s.mark && <ReturnMark size={7} color="#777" />}
              {s.name}
            </StyleName>
          </StyleItem>
        ))}
        <GalleryScroll>
          <ScrollStep $h={21} $off>
            <svg width="7" height="4" viewBox="0 0 7 4" fill="#bdbdbd">
              <path d="M0 4l3.500-4L7 4z" />
            </svg>
          </ScrollStep>
          <ScrollStep $h={19}>
            <Caret />
          </ScrollStep>
          <ScrollStep $h={17}>
            <svg width="7" height="6" viewBox="0 0 7 6" fill="#666">
              <path d="M0 0h7v1H0zM0 2h7L3.500 6z" />
            </svg>
          </ScrollStep>
        </GalleryScroll>
      </Gallery>
      <GroupLabel $inset={14}>样式</GroupLabel>
      <LauncherIcon />
    </Group>
  );
}

function EditGroup() {
  return (
    <Group $w={85} $pad={9}>
      <EditBody>
        <MiniRow>
          <EditIcon>{icons.find}</EditIcon>查找
          <MiniChevron $l={11}>
            <Chevron />
          </MiniChevron>
        </MiniRow>
        <MiniRow>
          <EditIcon>{icons.replace}</EditIcon>替换
        </MiniRow>
        <MiniRow>
          <EditIcon>{icons.select}</EditIcon>选择
          <MiniChevron $l={5}>
            <Chevron />
          </MiniChevron>
        </MiniRow>
      </EditBody>
      <GroupLabel>编辑</GroupLabel>
    </Group>
  );
}

function SaveGroup() {
  return (
    <Group $w={70}>
      <SaveBody>
        {icons.cloud}
        <SaveText>
          保存到
          <br />
          百度网盘
        </SaveText>
      </SaveBody>
      <GroupLabel>保存</GroupLabel>
    </Group>
  );
}

function StatusArea() {
  return (
    <StatusBar>
      <StatusItem $word={2.5}>{'第 1 页, 共 1 页'}</StatusItem>
      <StatusItem $l={20} $word={3}>{'11 个字'}</StatusItem>
      <StatusItem $l={14} $word={3}>{'11 个字符'}</StatusItem>
      <StatusItem $l={18}>{icons.book}</StatusItem>
      <StatusItem $l={17}>中文(中国)</StatusItem>
      <StatusItem $l={19}>{icons.calendar}</StatusItem>
      <StatusItem $l={18}>{icons.access}</StatusItem>
      <StatusItem $l={3}>{'辅助功能: 调查'}</StatusItem>
      <ViewSet>
        <ViewButton $w={40}>{icons.read}</ViewButton>
        <ViewButton $w={40} $active>
          {icons.print}
        </ViewButton>
        <ViewButton $w={40}>{icons.web}</ViewButton>
      </ViewSet>
      <Zoomer>
        <StatusItem>−</StatusItem>
        <ZoomLine />
        <StatusItem>+</StatusItem>
      </Zoomer>
      <ZoomValue>133%</ZoomValue>
    </StatusBar>
  );
}

export default function App() {
  return (
    <Window>
      <GlobalStyle />
      <TitleArea />
      <Ribbon>
        <ClipboardGroup />
        <FontGroup />
        <ParagraphGroup />
        <StylesGroup />
        <EditGroup />
        <SaveGroup />
        <Collapse>
          <svg width="11" height="6" viewBox="0 0 11 6" fill="none" stroke="#555">
            <path d="M.5 5.500l5-5 5 5" />
          </svg>
        </Collapse>
      </Ribbon>
      <Workspace>
        <DocArea>
          <Page>
            <Crops>
              <Crop />
              <Crop $right />
            </Crops>
            <Para>
              尊敬的公司领导：
              <ReturnMark />
            </Para>
            <Para $indent={40}>
              您好！
              <ReturnMark />
            </Para>
            <RedBox />
            <Arrow width="80" height="130" viewBox="740 425 80 130" fill="#ff0000">
              <path d="M748 432l30 21-9 4 43 86-10 5-44-85-9 5z" />
            </Arrow>
          </Page>
        </DocArea>
        <Scrollbar>
          <ScrollEnd $h={16}>
            <svg width="9" height="5" viewBox="0 0 9 5" fill="#777">
              <path d="M0 5l4.500-5L9 5z" />
            </svg>
          </ScrollEnd>
          <Track>
            <Thumb />
          </Track>
          <ScrollGap />
          <ScrollDown $h={14}>
            <Caret />
          </ScrollDown>
        </Scrollbar>
      </Workspace>
      <StatusArea />
      <Watermark>
        <MarkPaw width="96" height="112" viewBox="0 0 96 112" fill="#f7f7f7" stroke="#cfcfcf">
          <ellipse cx="34" cy="20" rx="12" ry="17" />
          <ellipse cx="63" cy="25" rx="13" ry="17" />
          <ellipse cx="8" cy="45" rx="12" ry="17" transform="rotate(-12 8 45)" />
          <ellipse cx="82" cy="52" rx="12" ry="17" transform="rotate(-10 82 52)" />
          <path d="M42 47c14 0 20 12 28 20 8 8 14 14 14 25 0 12-12 19-24 17-6-1-12-3-18-3s-12 3-18 3C12 111 2 103 3 92 4 80 12 75 20 67c8-8 8-20 22-20z" />
        </MarkPaw>
        <MarkBai>Bai</MarkBai>
        <MarkDu>du</MarkDu>
        <MarkCn>经验</MarkCn>
        <MarkUrl>jingyan.baidu.com</MarkUrl>
      </Watermark>
    </Window>
  );
}
